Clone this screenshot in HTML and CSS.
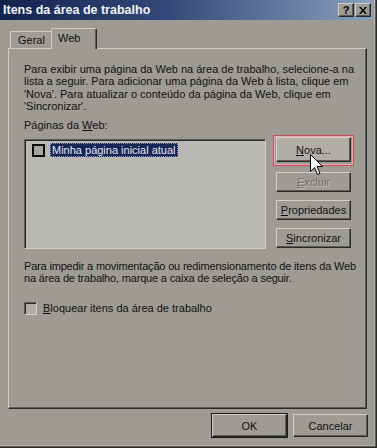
FILE: index.html
```html
<!DOCTYPE html>
<html lang="pt">
<head>
<meta charset="utf-8">
<title>Itens da área de trabalho</title>
<link rel="stylesheet" href="styles.css">
</head>
<body>
<div class="window">
  <div class="titlebar">
    <span class="title">Itens da área de trabalho</span>
    <div class="title-btns">
      <span class="tbtn">?</span>
      <span class="tbtn">
        <svg width="8" height="7" viewBox="0 0 8 7"><path d="M0 0h2l2 2.5L6 0h2L5 3.5 8 7H6L4 4.5 2 7H0l3-3.5z" fill="#000"/></svg>
      </span>
    </div>
  </div>
  <div class="tabs">
    <div class="tab">Geral</div>
    <div class="tab active">Web</div>
  </div>
  <div class="panel">
    <p class="para">Para exibir uma página da Web na área de trabalho, selecione-a na<br>lista a seguir. Para adicionar uma página da Web à lista, clique em<br>'Nova'. Para atualizar o conteúdo da página da Web, clique em<br>'Sincronizar'.</p>
    <div class="label">Páginas da <u>W</u>eb:</div>
    <div class="list-row">
      <div class="listbox">
        <div class="item">
          <span class="item-check"></span>
          <span class="item-text">Minha página inicial atual</span>
        </div>
      </div>
      <div class="side-btns">
        <div class="ring"><div class="btn hot"><u>N</u>ova...</div></div>
        <div class="btn disabled"><u>E</u>xcluir</div>
        <div class="btn"><u>P</u>ropriedades</div>
        <div class="btn"><u>S</u>incronizar</div>
      </div>
    </div>
    <p class="para para2">Para impedir a movimentação ou redimensionamento de itens da Web<br>na área de trabalho, marque a caixa de seleção a seguir.</p>
    <div class="check-row">
      <span class="checkbox"></span>
      <span><u>B</u>loquear itens da área de trabalho</span>
    </div>
  </div>
  <div class="footer">
    <div class="btn default">OK</div>
    <div class="btn">Cancelar</div>
  </div>
  <svg class="cursor" width="13" height="21" viewBox="0 0 13 21">
    <path d="M0.5 0.5V17.5L4.5 13.5L7.5 20.5L10 19.5L7 12.5H12.5Z" fill="#fff" stroke="#000" stroke-width="1"/>
  </svg>
</div>
</body>
</html>
```
FILE: styles.css
```css
* { box-sizing: border-box; }
html, body { margin: 0; padding: 0; }
body {
  width: 377px;
  height: 448px;
  overflow: hidden;
  background: #9e9b94;
  font-family: "Liberation Sans", Arial, sans-serif;
  font-size: 11px;
  color: #111;
}
.window {
  position: relative;
  width: 377px;
  height: 448px;
  background: #9e9b94;
  display: flex;
  flex-direction: column;
  box-shadow: inset -1px -1px #2a2a28, inset -2px -2px #5c5a55, inset -3px -3px #b5b2ab;
}
.titlebar {
  height: 20px;
  margin-right: 4px;
  display: flex;
  align-items: center;
  justify-content: space-between;
  padding-left: 3px;
  padding-right: 2px;
  background: linear-gradient(90deg, #12224f 0%, #34497a 45%, #8b9fbe 100%);
}
.title {
  color: #f2f2f2;
  font-weight: bold;
  font-size: 12.5px;
}
.title-btns { display: flex; gap: 1px; }
.tbtn {
  width: 16px;
  height: 14px;
  display: flex;
  align-items: center;
  justify-content: center;
  background: #9e9b94;
  font-weight: bold;
  font-size: 11px;
  color: #000;
  border-top: 1px solid #d2cfc8;
  border-left: 1px solid #d2cfc8;
  border-right: 1px solid #2a2a28;
  border-bottom: 1px solid #2a2a28;
  box-shadow: inset -1px -1px #5c5a55;
}
.tabs {
  height: 28px;
  display: flex;
  align-items: flex-end;
  padding-left: 10px;
}
.tab {
  height: 17px;
  width: 42px;
  display: flex;
  align-items: center;
  padding-left: 7px;
  border-top: 1px solid #cfccc5;
  border-left: 1px solid #cfccc5;
  border-right: 1px solid #5c5a55;
  border-radius: 2px 2px 0 0;
}
.tab.active {
  height: 21px;
  width: 46px;
  margin-left: -1px;
  margin-bottom: -1px;
  padding-left: 6px;
  padding-bottom: 3px;
  background: #9e9b94;
  position: relative;
  z-index: 1;
  border-right: 1px solid #2a2a28;
  box-shadow: inset -1px 0 #5c5a55;
}
.panel {
  margin-left: 8px;
  width: 359px;
  height: 361px;
  padding: 14px 6px 0 15px;
  border-top: 1px solid #cfccc5;
  border-left: 1px solid #cfccc5;
  border-right: 1px solid #2a2a28;
  border-bottom: 1px solid #2a2a28;
  box-shadow: inset -1px -1px #5c5a55;
}
.para {
  margin: 0;
  line-height: 12.3px;
  white-space: nowrap;
}
.label { margin-top: 7px; line-height: 13px; }
.list-row {
  display: flex;
  gap: 10px;
  margin-top: 7px;
}
.listbox {
  width: 242px;
  height: 110px;
  background: #b9b8b4;
  border-top: 1px solid #5c5a55;
  border-left: 1px solid #5c5a55;
  border-right: 1px solid #d2cfc8;
  border-bottom: 1px solid #d2cfc8;
  box-shadow: inset 1px 1px #2a2a28;
  padding: 3px 0 0 7px;
}
.item { display: flex; align-items: center; gap: 5px; }
.item-check {
  width: 13px;
  height: 13px;
  border: 2px solid #0a0a0a;
  background: #a8a7a2;
}
.item-text {
  background: #152657;
  color: #e8e8ee;
  padding: 0 2px;
  line-height: 14px;
  outline: 1px dotted #8d96b4;
  outline-offset: -1px;
}
.side-btns {
  display: flex;
  flex-direction: column;
  gap: 8px;
  margin-top: -4px;
  margin-left: -3px;
}
.ring {
  width: 81px;
  height: 31px;
  padding: 1px 2px 0 2px;
  border: 1px solid #c9505b;
  box-shadow: inset 0 0 0 1px #e7a9ae;
  margin-bottom: -2px;
}
.btn {
  width: 75px;
  height: 20px;
  display: flex;
  align-items: center;
  justify-content: center;
  background: #9e9b94;
  border-top: 1px solid #d2cfc8;
  border-left: 1px solid #d2cfc8;
  border-right: 1px solid #2a2a28;
  border-bottom: 1px solid #2a2a28;
  box-shadow: inset -1px -1px #5c5a55;
  margin-left: 3px;
}
.ring .btn { margin-left: 0; }
.btn.hot {
  height: 25px;
  background: #b0ada6;
}
.btn.disabled {
  color: #6f6d68;
  text-shadow: 1px 1px #c5c2bb;
}
.para2 { margin-top: 12px; line-height: 11.8px; letter-spacing: -0.18px; }
.check-row {
  display: flex;
  align-items: center;
  gap: 6px;
  margin-top: 17px;
}
.checkbox {
  width: 13px;
  height: 13px;
  background: #aeaca6;
  border-top: 1px solid #5c5a55;
  border-left: 1px solid #5c5a55;
  border-right: 1px solid #d2cfc8;
  border-bottom: 1px solid #d2cfc8;
  box-shadow: inset 1px 1px #2a2a28;
}
.footer {
  display: flex;
  justify-content: flex-end;
  gap: 6px;
  padding: 5px 9px 0 0;
}
.footer .btn {
  width: 75px;
  height: 23px;
  margin-left: 0;
}
.btn.default {
  outline: 1px solid #1a1a18;
  outline-offset: 0;
  border-color: #d2cfc8 #2a2a28 #2a2a28 #d2cfc8;
}
.cursor {
  position: absolute;
  left: 310px;
  top: 154px;
}
```
